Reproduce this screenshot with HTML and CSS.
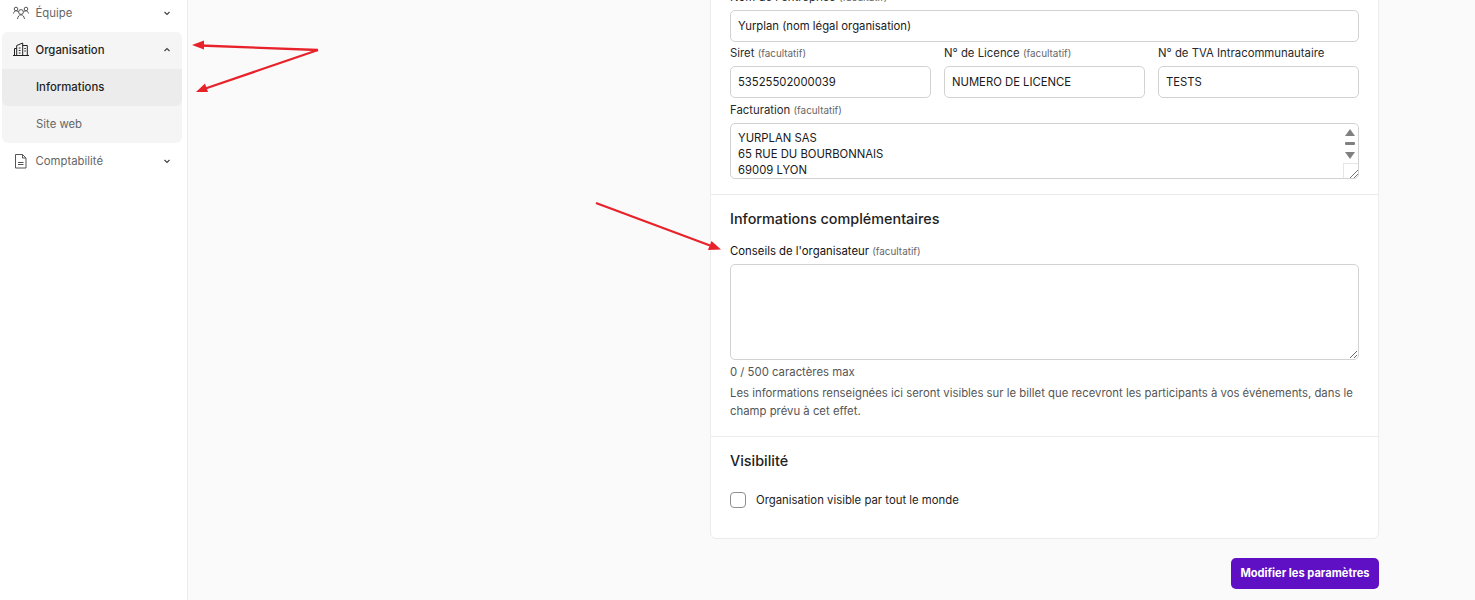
FILE: index.html
```html
<!DOCTYPE html>
<html lang="fr">
<head>
  <meta charset="UTF-8">
  <title>Organisation - Informations</title>
  <link rel="stylesheet" href="styles.css">
</head>
<body>
  <div class="page">
    <aside class="sidebar">
      <div class="nav-item">
        <svg class="nav-icon" viewBox="0 0 16 16" fill="none" stroke="currentColor" stroke-width="1">
          <circle cx="8" cy="7" r="2.400"/>
          <circle cx="3" cy="4" r="1.800"/>
          <circle cx="13" cy="4" r="1.800"/>
          <path d="M4.500 14C5 11.500 6 9.800 8 9.800s3 1.700 3.500 4.200"/>
          <path d="M.5 8.500C1 6.500 2 5.800 3 5.800s1.600.3 2.400 1.200M15.500 8.500C15 6.500 14 5.800 13 5.800s-1.600.3-2.400 1.200"/>
        </svg>
        <span class="nav-label">Équipe</span>
        <svg class="nav-chevron" viewBox="0 0 8 8" fill="none" stroke="currentColor" stroke-width="1.200"><path d="M1.500 3l2.500 2.500L6.500 3"/></svg>
      </div>

      <div class="nav-group">
        <div class="nav-item nav-item-open">
          <svg class="nav-icon" viewBox="0 0 16 16" fill="none" stroke="currentColor" stroke-width="1">
            <path d="M0 13.500h16M1.500 13.500V6.500h2.200M3.700 13.500V3.500L9.700 1v12.500M9.700 3.500h4.600v10"/>
            <path d="M5.800 6h1.700M5.800 8.500h1.700M5.800 11h1.700M11.300 6.500h1.500M11.300 9h1.500"/>
          </svg>
          <span class="nav-label">Organisation</span>
          <svg class="nav-chevron" viewBox="0 0 8 8" fill="none" stroke="currentColor" stroke-width="1.200"><path d="M1.500 5L4 2.500 6.500 5"/></svg>
        </div>
        <div class="nav-sub nav-sub-active">Informations</div>
        <div class="nav-sub">Site web</div>
      </div>

      <div class="nav-item">
        <svg class="nav-icon" viewBox="0 0 16 16" fill="none" stroke="currentColor" stroke-width="1">
          <path d="M2.500 1.500h7l3.500 3.500v10h-10.500z"/>
          <path d="M9.500 1.500V5H13"/>
          <path d="M5 9.500h5.500M5 11.500h5.500"/>
        </svg>
        <span class="nav-label">Comptabilité</span>
        <svg class="nav-chevron" viewBox="0 0 8 8" fill="none" stroke="currentColor" stroke-width="1.200"><path d="M1.500 3l2.500 2.500L6.500 3"/></svg>
      </div>
    </aside>

    <main class="main">
      <form class="card">
        <section class="section section-company">
          <div class="field">
            <label class="label">Nom de l'entreprise <small>(facultatif)</small></label>
            <input class="input" type="text" value="Yurplan (nom légal organisation)">
          </div>
          <div class="row-3">
            <div class="field">
              <label class="label">Siret <small>(facultatif)</small></label>
              <input class="input" type="text" value="53525502000039">
            </div>
            <div class="field">
              <label class="label">N° de Licence <small>(facultatif)</small></label>
              <input class="input" type="text" value="NUMERO DE LICENCE">
            </div>
            <div class="field">
              <label class="label">N° de TVA Intracommunautaire</label>
              <input class="input" type="text" value="TESTS">
            </div>
          </div>
          <div class="field field-billing">
            <label class="label">Facturation <small>(facultatif)</small></label>
            <div class="billing">
              <textarea class="textarea textarea-billing">YURPLAN SAS
65 RUE DU BOURBONNAIS
69009 LYON
FRANCE</textarea>
              <div class="scrollbar">
                <span class="scroll-up"></span>
                <span class="scroll-thumb"></span>
                <span class="scroll-down"></span>
                <span class="scroll-corner"></span>
              </div>
            </div>
          </div>
        </section>

        <section class="section section-extra">
          <h3 class="section-title">Informations complémentaires</h3>
          <div class="field">
            <label class="label label-dark">Conseils de l'organisateur <small>(facultatif)</small></label>
            <textarea class="textarea textarea-advice"></textarea>
          </div>
          <p class="counter">0 / 500 caractères max</p>
          <p class="help">Les informations renseignées ici seront visibles sur le billet que recevront les participants à vos événements, dans le champ prévu à cet effet.</p>
        </section>

        <section class="section section-visibility">
          <h3 class="section-title">Visibilité</h3>
          <label class="check">
            <span class="check-box"></span>
            Organisation visible par tout le monde
          </label>
        </section>
      </form>
      <button class="submit" type="button">Modifier les paramètres</button>
    </main>
  </div>

  <!-- annotations on top of the screenshot -->
  <svg class="arrows" width="1475" height="600" fill="none">
    <g stroke="#e8222a" stroke-width="2.300">
      <path d="M318 50L200 45.500"/>
      <path d="M318 50L204 89"/>
      <path d="M596 203L710 245.500"/>
    </g>
    <g fill="#e8222a">
      <path d="M192 45l12-4.500v9z"/>
      <path d="M196 92l9-8.500 3 8.500z"/>
      <path d="M721 249.500l-13 .5 3.500-9z"/>
    </g>
  </svg>
</body>
</html>
```

FILE: styles.css
```css
* {
  box-sizing: border-box;
}
html, body {
  height: 100%;
  margin: 0;
  overflow: hidden;
}
body {
  background: #fafafa;
  color: #1a1a1a;
  font-family: Inter, "Liberation Sans", sans-serif;
  font-size: 11.350px;
}
.page {
  display: flex;
  height: 600px;
}

/* sidebar */
.sidebar {
  flex: 0 0 188px;
  padding: 0 5px 0 2px;
  background: #fff;
  border-right: 1px solid #ececec;
  color: #666;
}
.nav-item {
  display: flex;
  align-items: center;
  height: 37px;
  padding: 0 11px 1px;
}
.sidebar > .nav-item:first-child {
  margin-top: -5px;
}
.nav-icon {
  flex: none;
  width: 16px;
  height: 16px;
  margin-right: 6.500px;
  color: #555;
}
.nav-label {
  flex: 1;
}
.nav-chevron {
  flex: none;
  width: 8px;
  height: 8px;
  color: #444;
}
.nav-group {
  background: #f5f5f5;
  border-radius: 6px;
}
.nav-item-open {
  color: #1f1f1f;
  font-weight: 500;
}
.nav-item-open .nav-icon {
  color: #222;
}
.nav-sub {
  display: flex;
  align-items: center;
  height: 37px;
  padding: 0 0 1px 34px;
}
.nav-sub-active {
  background: #ececec;
  border-radius: 0 0 6px 6px;
  color: #1f1f1f;
  font-weight: 500;
}

/* form */
.main {
  flex: 1;
  display: flex;
  flex-direction: column;
  align-items: flex-end;
  padding-right: 96px;
}
.card {
  width: 669px;
  margin-top: -30px;
  background: #fff;
  border: 1px solid #ececec;
  border-radius: 6px;
}
.section {
  padding: 0 19px;
  border-top: 1px solid #ececec;
}
.section:first-child {
  border-top: 0;
}
.section-company {
  display: flex;
  flex-direction: column;
  gap: 3px;
  padding-top: 18px;
  padding-bottom: 15px;
}
.section-extra {
  padding-top: 15px;
  padding-bottom: 16px;
}
.section-visibility {
  padding-top: 15px;
  padding-bottom: 30px;
}
.row-3 {
  display: grid;
  grid-template-columns: repeat(3, 1fr);
  gap: 13px;
}
.field {
  display: flex;
  flex-direction: column;
  gap: 5px;
}
.field-billing {
  margin-top: 1px;
}
.label {
  height: 16px;
  font-size: 11.350px;
  line-height: 16px;
  color: #2a2a2a;
}
.label-dark {
  color: #111;
}
.label small {
  font-size: 9.900px;
  color: #666;
}
.input,
.textarea {
  display: block;
  width: 100%;
  padding: 6px 7px;
  background: #fff;
  border: 1px solid #d2d2d2;
  border-radius: 5px;
  color: #1a1a1a;
  font: 400 11.300px/16px Inter, "Liberation Sans", sans-serif;
}
.input {
  height: 32px;
}
.textarea {
  resize: vertical;
}
.billing {
  position: relative;
}
.textarea-billing {
  height: 56px;
  overflow: hidden;
}
.textarea-advice {
  height: 96px;
}
.scrollbar {
  position: absolute;
  top: 1px;
  right: 1px;
  bottom: 1px;
  width: 15px;
  background: #fff;
  border-radius: 0 5px 5px 0;
}
.scroll-up,
.scroll-down,
.scroll-thumb,
.scroll-corner {
  position: absolute;
  left: 2px;
}
.scroll-up {
  top: 5px;
  border: 5px solid transparent;
  border-top: 0;
  border-bottom: 7px solid #808080;
}
.scroll-down {
  top: 28px;
  border: 5px solid transparent;
  border-bottom: 0;
  border-top: 7px solid #808080;
}
.scroll-thumb {
  top: 18px;
  width: 10px;
  height: 3px;
  border-radius: 1px;
  background: #808080;
}
.scroll-corner {
  left: 0;
  bottom: 0;
  width: 15px;
  height: 15px;
  border: 1px solid #e6e6e6;
  border-width: 1px 0 0 1px;
  background: linear-gradient(135deg, transparent 68%, #777 68%, #777 72%, transparent 72%, transparent 84%, #777 84%, #777 88%, transparent 88%);
}
.section-title {
  margin: 0 0 15px;
  font-size: 14.400px;
  line-height: 18px;
  font-weight: 500;
  color: #222;
}
.counter {
  margin: 4px 0 0;
  line-height: 16px;
  color: #555;
}
.help {
  margin: 4px 0 0;
  line-height: 18px;
  color: #555;
}
.section-visibility .section-title {
  margin-bottom: 22px;
}
.check {
  display: flex;
  align-items: center;
  gap: 10px;
  color: #222;
}
.check-box {
  width: 16px;
  height: 16px;
  border: 1px solid #8f8f8f;
  border-radius: 4px;
  background: #fff;
}
.submit {
  margin-top: 19px;
  width: 148px;
  height: 31px;
  padding: 0 0 1px;
  border: 0;
  border-radius: 5px;
  background: #5f0fc4;
  color: #fff;
  font: 700 11.100px Inter, "Liberation Sans", sans-serif;
}

/* annotations */
.arrows {
  position: absolute;
  top: 0;
  left: 0;
  pointer-events: none;
}
```
